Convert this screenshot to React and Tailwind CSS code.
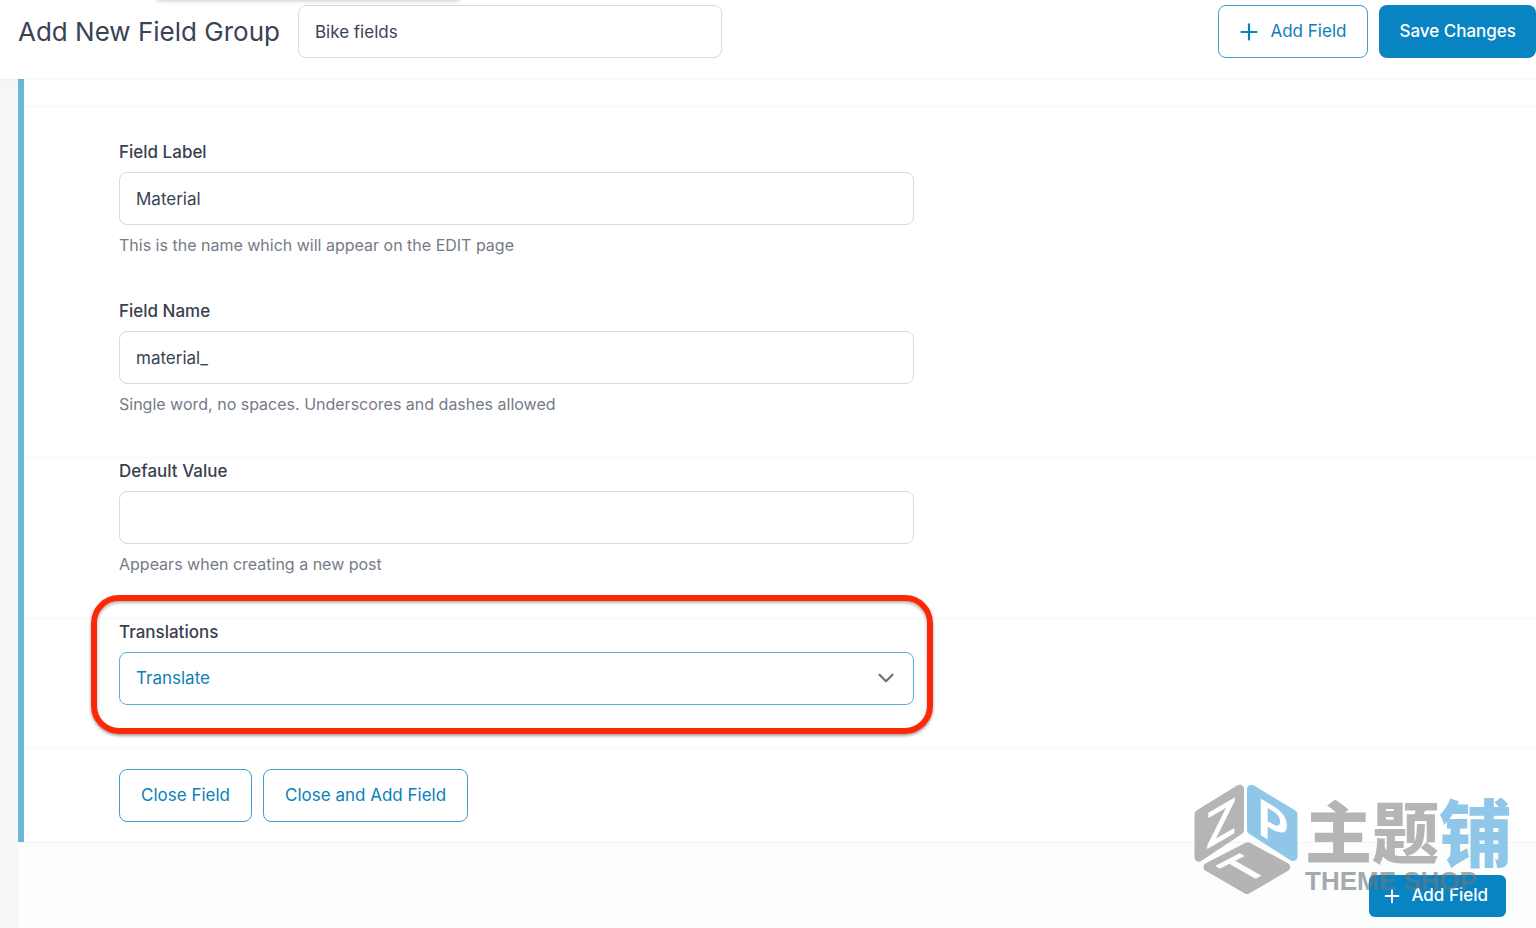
import { useState } from 'react';
import { ChevronDown, Plus } from 'lucide-react';

const inputClass =
    'block w-full h-[53px] rounded-lg border border-[#d9dade] bg-white px-4 text-[17px] leading-6 text-[#3a4256] focus:outline-none';

const outlineButton =
    'flex h-[53px] items-center justify-center rounded-lg border border-[#3d9dcd] bg-white px-[21px] text-[17px] text-[#0d80b8]';

const TextField = ({ id, label, hint, value, onChange }) => (
    <div className="max-w-[795px]">
        <label htmlFor={id} className="mb-2 block text-[17px] font-medium leading-6 text-[#3a3f50]">
            {label}
        </label>
        <input id={id} type="text" className={inputClass} value={value} onChange={(e) => onChange(e.target.value)} />
        <p className="mt-2 text-base leading-6 text-[#757b87]">{hint}</p>
    </div>
);

const Section = ({ className, children }) => (
    <section className={`border-t border-[#f5f6f7] pl-[95px] pr-8 ${className}`}>{children}</section>
);

// Cube logo and shop name, laid over the bottom right corner
const Watermark = () => (
    <div className="pointer-events-none absolute bottom-8 right-6 flex h-[113px] items-start gap-[6px] opacity-90">
        <svg width="106" height="113" viewBox="36 40 318 340" aria-hidden="true">
            <g strokeWidth="26" strokeLinejoin="round">
                <path d="M53 134 L176 58 V182 L53 264 Z" fill="#adadad" stroke="#adadad" />
                <path d="M211 58 L337 134 V262 L211 182 Z" fill="#84c2e6" stroke="#84c2e6" />
                <path d="M80 293 L200 231 L315 293 L198 361 Z" fill="#adadad" stroke="#adadad" />
            </g>
            <g fill="#ffffff" fontFamily="Lato, sans-serif" fontWeight="700" textAnchor="middle">
                <text fontSize="148" transform="matrix(1 -0.58 0 1 120 214)">Z</text>
                <text fontSize="152" transform="matrix(1 0.58 0 1 274 218)">P</text>
                <text fontSize="148" transform="matrix(0.87 -0.45 0.87 0.5 232 324)">T</text>
            </g>
        </svg>
        <div className="pt-2">
            <div
                className="flex items-center text-[67px] font-black leading-[76px] text-[#adadad]"
                style={{ fontFamily: '"Noto Sans CJK SC", sans-serif' }}
            >
                <span>主题</span>
                <span className="text-[73px] text-[#84c2e6]">铺</span>
            </div>
            <div
                className="text-[26px] font-bold leading-7 text-[#6f767b]/70"
                style={{ fontFamily: '"Liberation Sans", sans-serif' }}
            >
                THEME SHOP
            </div>
        </div>
    </div>
);

export default function App() {
    const [groupName, setGroupName] = useState('Bike fields');
    const [fieldLabel, setFieldLabel] = useState('Material');
    const [fieldName, setFieldName] = useState('material_');
    const [defaultValue, setDefaultValue] = useState('');
    const [translation, setTranslation] = useState('translate');

    return (
        <div
            className="relative flex min-h-screen flex-col overflow-hidden bg-[#f6f6f9]"
            style={{ fontFamily: 'Inter, "Liberation Sans", sans-serif' }}
        >
            <header className="relative flex h-[79px] items-start justify-between bg-white pt-[5px] shadow-[0_1px_2px_rgba(0,0,0,0.04)]">
                {/* shadow of the panel that sits above the page */}
                <div className="absolute -top-2 left-[156px] h-2 w-[304px] rounded-md shadow-[0_0_5px_rgba(0,0,0,0.3)]" />
                <div className="flex items-center gap-[18px] pl-[18px]">
                    <h1 className="whitespace-nowrap text-[26px] leading-[53px] text-[#3a4256]">Add New Field Group</h1>
                    <input
                        type="text"
                        aria-label="Field group name"
                        className="h-[53px] w-[424px] rounded-lg border border-[#d9dade] bg-white px-4 text-[17px] text-[#3a4256] focus:outline-none"
                        value={groupName}
                        onChange={(e) => setGroupName(e.target.value)}
                    />
                </div>
                <div className="flex gap-[11px]">
                    <button type="button" className={`${outlineButton} gap-2`}>
                        <Plus size={26} strokeWidth={2} className="-ml-1" />
                        Add Field
                    </button>
                    <button
                        type="button"
                        className="h-[53px] rounded-lg bg-[#0784c1] px-5 text-[17px] font-medium text-white"
                    >
                        Save Changes
                    </button>
                </div>
            </header>

            <main className="ml-[18px] flex flex-1 flex-col">
                <div className="border-l-[6px] border-[#6cb6da] bg-white pt-[27px]">
                    <Section className="flex flex-col gap-[42px] pb-[41px] pt-[33px]">
                        <TextField
                            id="field-label"
                            label="Field Label"
                            hint="This is the name which will appear on the EDIT page"
                            value={fieldLabel}
                            onChange={setFieldLabel}
                        />
                        <TextField
                            id="field-name"
                            label="Field Name"
                            hint="Single word, no spaces. Underscores and dashes allowed"
                            value={fieldName}
                            onChange={setFieldName}
                        />
                    </Section>

                    <Section className="pb-[42px] pt-px">
                        <TextField
                            id="default-value"
                            label="Default Value"
                            hint="Appears when creating a new post"
                            value={defaultValue}
                            onChange={setDefaultValue}
                        />
                    </Section>

                    <Section className="pb-[42px] pt-px">
                        <div className="relative max-w-[795px]">
                            <label
                                htmlFor="translations"
                                className="mb-2 block text-[17px] font-medium leading-6 text-[#3a3f50]"
                            >
                                Translations
                            </label>
                            <div className="relative">
                                <select
                                    id="translations"
                                    className="block h-[53px] w-full appearance-none rounded-lg border border-[#5cb0d8] bg-white px-4 text-[17px] text-[#0d80b8] focus:outline-none"
                                    value={translation}
                                    onChange={(e) => setTranslation(e.target.value)}
                                >
                                    <option value="translate">Translate</option>
                                </select>
                                <ChevronDown
                                    size={26}
                                    strokeWidth={2}
                                    className="pointer-events-none absolute right-[15px] top-[13px] text-[#6b6f76]"
                                />
                            </div>
                            {/* highlight ring */}
                            <div className="pointer-events-none absolute -bottom-[29px] -left-[28px] -right-[19px] -top-[25px] rounded-[28px] border-[6px] border-[#fb2a06] shadow-[0_2px_3px_rgba(0,0,0,0.35),inset_0_2px_3px_rgba(0,0,0,0.3)]" />
                        </div>
                    </Section>

                    <Section className="flex gap-[11px] pb-5 pt-[21px]">
                        <button type="button" className={outlineButton}>
                            Close Field
                        </button>
                        <button type="button" className={outlineButton}>
                            Close and Add Field
                        </button>
                    </Section>
                </div>

                <footer className="flex flex-1 items-start justify-end border-t border-[#f0f2f3] bg-[#fcfefe] pr-[30px] pt-8">
                    <button
                        type="button"
                        className="flex h-[42px] items-center gap-2 rounded-md bg-[#0784c1] pl-3 pr-[18px] text-[17px] font-medium text-white"
                    >
                        <Plus size={22} strokeWidth={2} />
                        Add Field
                    </button>
                </footer>
            </main>

            <Watermark />
        </div>
    );
}
